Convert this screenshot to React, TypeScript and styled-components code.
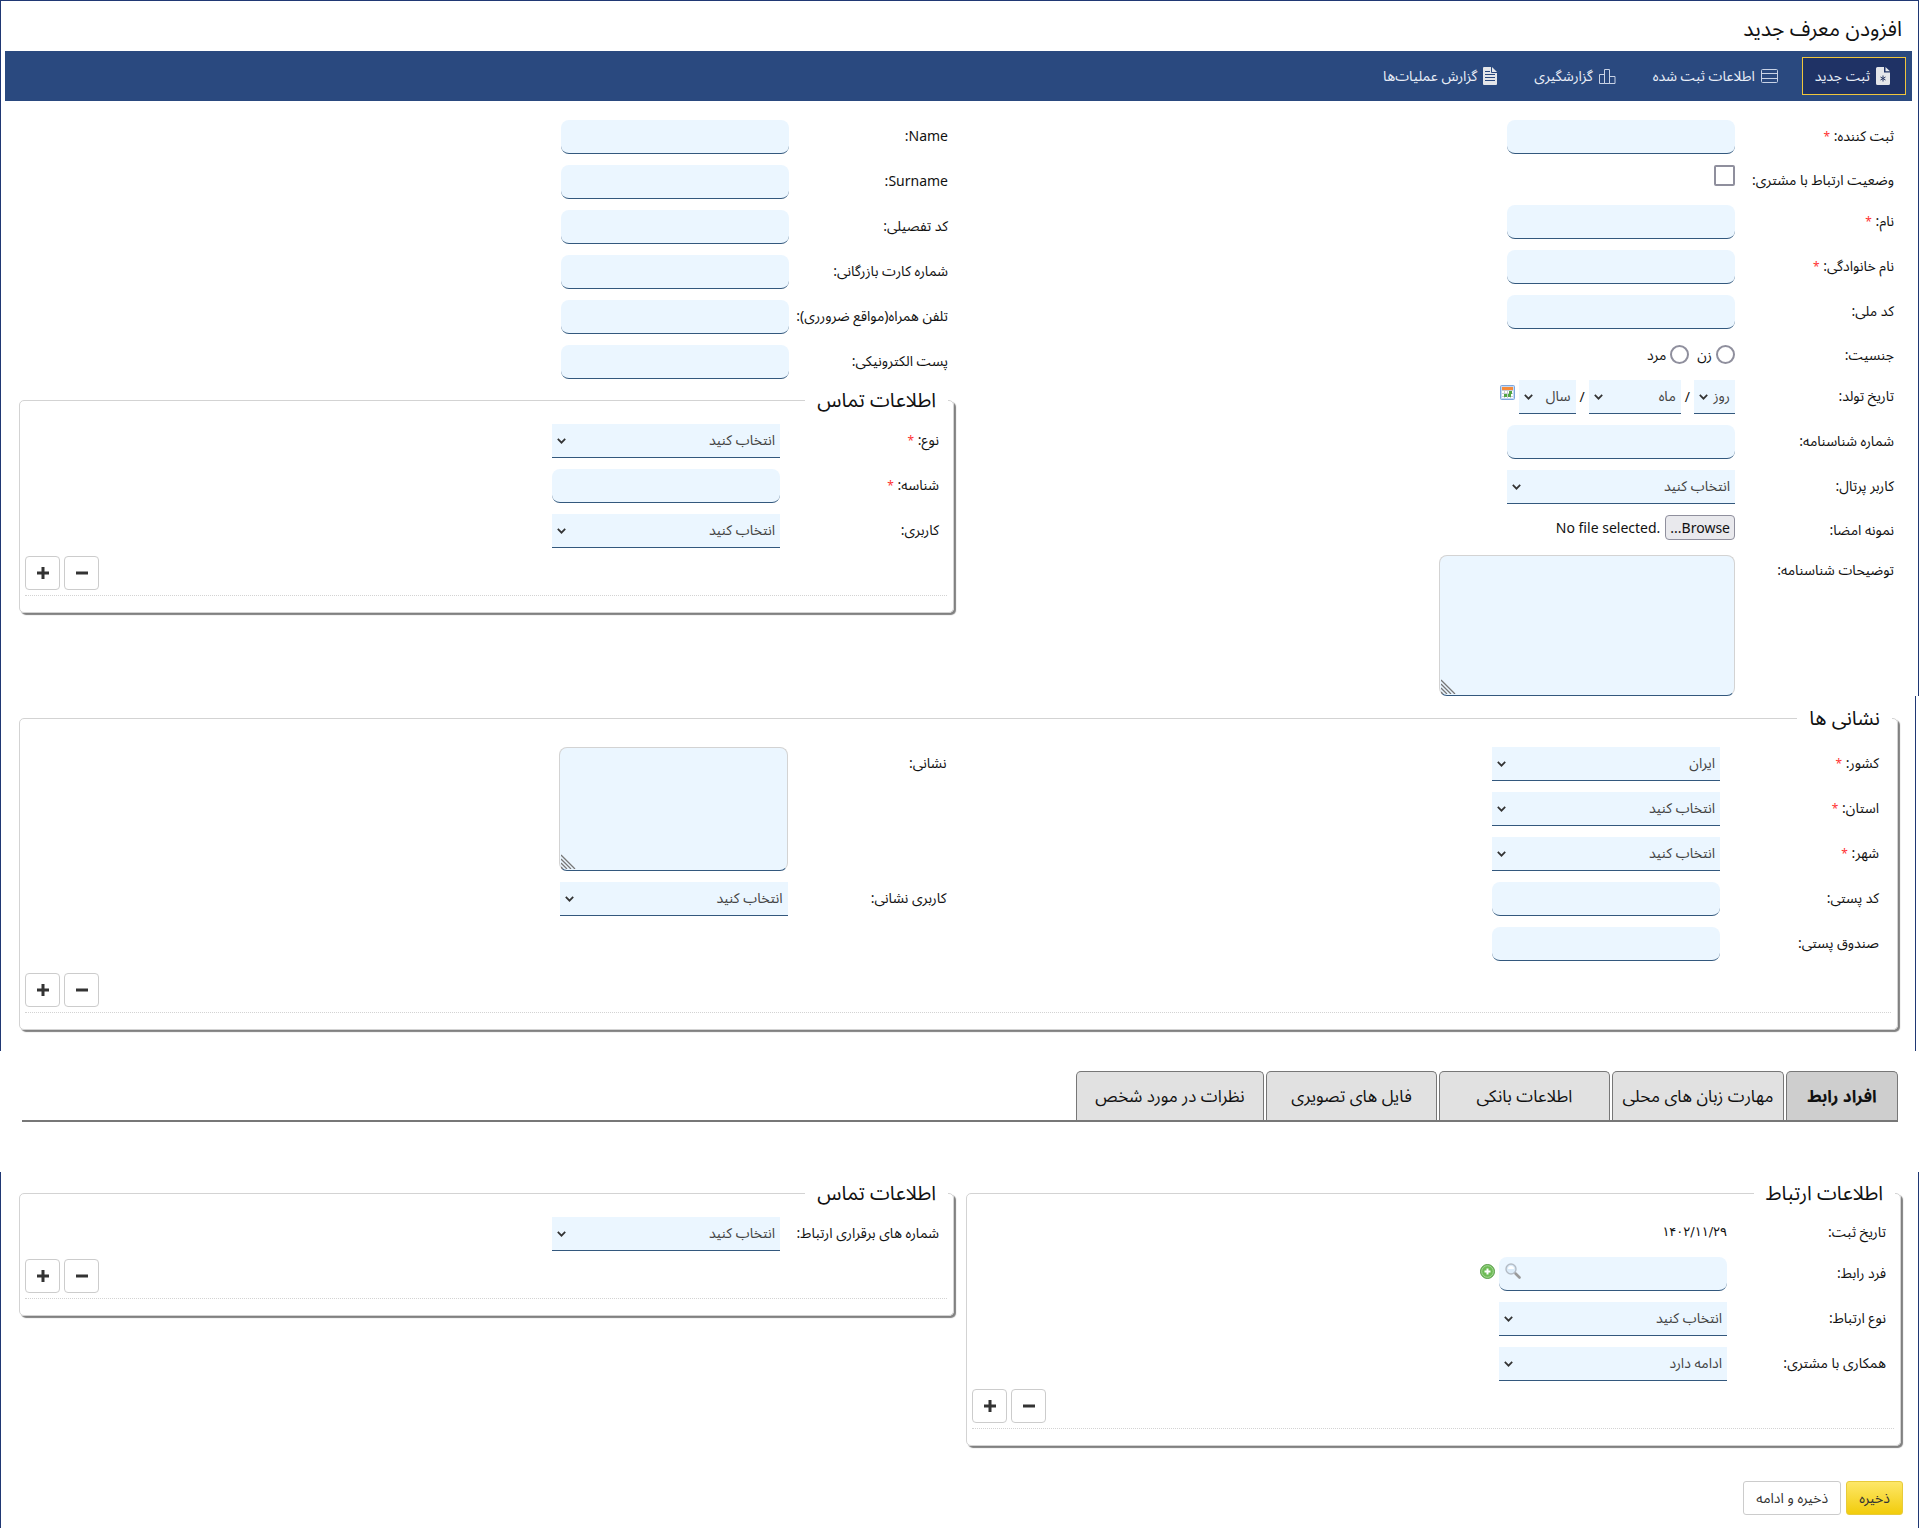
import React, { useId, useRef } from "react";
import styled, { createGlobalStyle, css } from "styled-components";

const color = {
  navy: "#203874",
  bar: "#2a497f",
  barActive: "#1f3265",
  gold: "#f0c63c",
  field: "#ebf6ff",
  fieldLine: "#33587d",
  line: "#d3d3d3",
  shade: "#808080",
  control: "#8f8f9d",
  text: "#111111",
  muted: "#444444",
  required: "#ff3333",
};

const GlobalStyle = createGlobalStyle`
  *, *::before, *::after { box-sizing: border-box; }
  body {
    margin: 0;
    background: #ffffff;
    color: ${color.text};
    font-family: "Noto Sans", "Noto Sans Arabic", "DejaVu Sans", sans-serif;
    font-size: 14px;
    line-height: 20px;
  }
  button, input, select, textarea { font: inherit; color: inherit; margin: 0; }
`;

/* ---------- page structure ---------- */

const Page = styled.main`
  direction: rtl;
`;

const Panel = styled.section<{ $first?: boolean; $narrow?: boolean }>`
  margin-right: ${(p) => (p.$narrow ? 4 : 1)}px;
  border: solid ${color.navy};
  border-width: ${(p) => (p.$first ? 1 : 0)}px 1px 0;
`;

const Title = styled.h1`
  margin: 0;
  padding: 9px 16px 5px;
  font-size: 21px;
  font-weight: 400;
  line-height: 36px;
`;

const Toolbar = styled.nav`
  display: flex;
  gap: 8px;
  margin: 0 6px 0 4px;
  padding: 6px;
  background: ${color.bar};
`;

const ToolLink = styled.a<{ $active?: boolean }>`
  display: flex;
  align-items: center;
  gap: 6px;
  height: 38px;
  padding: 0 15px 0 12px;
  border: 1px solid ${(p) => (p.$active ? color.gold : "transparent")};
  background: ${(p) => (p.$active ? color.barActive : "transparent")};
  color: #e9eef7;
  text-decoration: none;
`;

const Halves = styled.div<{ $top?: number }>`
  display: grid;
  grid-template-columns: 1fr 1fr;
  gap: 12px;
  align-items: start;
  padding: ${(p) => p.$top ?? 0}px 17px 0 18px;
`;

const FullWidth = styled.div`
  padding: 7px 17px 21px 18px;
`;

const Column = styled.div`
  display: flex;
  flex-direction: column;
  gap: 6px;
`;

const Rows = styled.div<{ $indent?: number }>`
  display: flex;
  flex-direction: column;
  gap: 11px;
  padding-right: ${(p) => p.$indent ?? 0}px;
`;

const Row = styled.div<{ $low?: boolean }>`
  display: grid;
  grid-template-columns: 159px 1fr;
  align-items: start;
  min-height: ${(p) => (p.$low ? 29 : 34)}px;
`;

const labelText = css<{ $low?: boolean }>`
  line-height: ${(p) => (p.$low ? 29 : 32)}px;
  white-space: nowrap;
`;

const Label = styled.label<{ $low?: boolean }>`
  ${labelText}
`;

const Caption = styled.span<{ $low?: boolean }>`
  ${labelText}
`;

const DateValue = styled.span`
  font-family: "DejaVu Sans", sans-serif;
  font-size: 13px;
  line-height: 29px;
`;

const Star = styled.span`
  color: ${color.required};
  font-size: 12px;
`;

/* ---------- controls ---------- */

const roundField = css`
  border: 0;
  border-bottom: 1px solid ${color.fieldLine};
  border-radius: 8px;
  background: ${color.field};
  outline: none;
`;

const TextInput = styled.input`
  ${roundField}
  display: block;
  width: 228px;
  height: 34px;
  padding: 0 8px;
`;

const AreaBox = styled.div<{ $wide?: boolean }>`
  position: relative;
  width: ${(p) => (p.$wide ? 296 : 229)}px;
  height: ${(p) => (p.$wide ? 141 : 124)}px;
`;

const Area = styled.textarea`
  ${roundField}
  display: block;
  width: 100%;
  height: 100%;
  padding: 8px;
  border: 1px solid ${color.line};
  border-bottom-color: ${color.fieldLine};
  resize: none;
`;

const Grip = styled.svg`
  position: absolute;
  left: 2px;
  bottom: 2px;
  pointer-events: none;
`;

const SelectBox = styled.div<{ $width: number }>`
  position: relative;
  width: ${(p) => p.$width}px;
  height: 34px;
`;

const NativeSelect = styled.select`
  appearance: none;
  display: block;
  width: 100%;
  height: 100%;
  padding: 0 5px 1px;
  border: 0;
  border-bottom: 1px solid ${color.fieldLine};
  border-radius: 0;
  background: ${color.field};
  color: ${color.muted};
  outline: none;
`;

const Chevron = styled.svg`
  position: absolute;
  left: 5px;
  top: 14px;
  pointer-events: none;
`;

const CheckBox = styled.input`
  appearance: none;
  display: block;
  width: 21px;
  height: 21px;
  border: 2px solid ${color.control};
  border-radius: 2px;
  background: #ffffff;
  &:checked { background: ${color.bar}; }
`;

const RadioRow = styled.div`
  display: flex;
  gap: 8px;
  height: 29px;
`;

const RadioLabel = styled.label`
  display: flex;
  align-items: center;
  gap: 4px;
`;

const Radio = styled.input`
  appearance: none;
  width: 19px;
  height: 19px;
  border: 2px solid ${color.control};
  border-radius: 50%;
  background: #ffffff;
  &:checked { background: ${color.bar}; }
`;

const Inline = styled.div<{ $gap: number }>`
  display: flex;
  align-items: center;
  gap: ${(p) => p.$gap}px;
`;

const IconButton = styled.button<{ $drop: number }>`
  display: flex;
  align-self: flex-start;
  padding: ${(p) => p.$drop}px 0 0;
  border: 0;
  background: none;
  cursor: pointer;
`;

const HiddenFile = styled.input`
  position: absolute;
  width: 1px;
  height: 1px;
  opacity: 0;
  pointer-events: none;
`;

const BrowseButton = styled.button`
  height: 25px;
  padding: 0 4px;
  border: 1px solid ${color.control};
  border-radius: 4px;
  background: #e9e9ed;
  line-height: 22px;
`;

const SearchBox = styled.div`
  position: relative;
`;

const SearchIcon = styled.svg`
  position: absolute;
  left: 6px;
  top: 6px;
  pointer-events: none;
`;

/* ---------- field groups ---------- */

const Group = styled.fieldset<{ $roomy?: boolean }>`
  min-width: 0;
  margin: 0;
  padding: ${(p) => (p.$roomy ? 14 : 9)}px 0 16px;
  border: 1px solid ${color.line};
  border-radius: 5px;
  box-shadow: 2px 2px 1px ${color.shade};
`;

const Legend = styled.legend`
  margin-right: 5px;
  padding: 0 12px;
  font-size: 20px;
  line-height: 30px;
`;

const AddressGrid = styled.div`
  display: grid;
  grid-template-columns: 1fr 1fr;
  gap: 6px;
  padding-right: 18px;
`;

const GroupFooter = styled.div<{ $roomy?: boolean }>`
  display: flex;
  justify-content: flex-end;
  gap: 4px;
  margin: ${(p) => (p.$roomy ? 12 : 8)}px 6px 0 5px;
  padding-bottom: 5px;
  border-bottom: 1px dotted ${color.line};
`;

const StepButton = styled.button`
  display: flex;
  align-items: center;
  justify-content: center;
  width: 35px;
  height: 34px;
  padding: 0;
  border: 1px solid #cccccc;
  border-radius: 4px;
  background: #ffffff;
`;

/* ---------- tabs and footer ---------- */

const TabArea = styled.div`
  padding: 20px 22px 50px;
`;

const TabList = styled.div`
  display: flex;
  gap: 2px;
  border-bottom: 2px solid #777777;
`;

const Tab = styled.button<{ $active?: boolean; $width: number }>`
  width: ${(p) => p.$width}px;
  height: 49px;
  padding: 0;
  border: 1px solid #777777;
  border-bottom: 0;
  border-radius: 5px 5px 0 0;
  background: ${(p) => (p.$active ? "#cecece" : "#e1e1e1")};
  font-size: 17px;
  font-weight: ${(p) => (p.$active ? 700 : 400)};
`;

const Actions = styled.div`
  display: flex;
  gap: 5px;
  padding: 35px 15px 13px;
`;

const Action = styled.button<{ $primary?: boolean }>`
  height: 34px;
  padding: 0 12px;
  border: 1px solid ${(p) => (p.$primary ? "#e8cb3a" : "#cccccc")};
  border-radius: 3px;
  background: ${(p) => (p.$primary ? "linear-gradient(#fde768, #f2cc0c)" : "#ffffff")};
  color: #333333;
`;

/* ---------- drawings ---------- */

const NewDocIcon = () => (
  <svg width="14" height="18" viewBox="0 0 14 18">
    <path d="M1.5 0H8v5.500h6v11A1.500 1.500 0 0 1 12.500 18h-11A1.500 1.500 0 0 1 0 16.500v-15A1.500 1.500 0 0 1 1.500 0z" fill="#e4e6ea" />
    <path d="M9.500 0L14 4.200H9.500z" fill="#e4e6ea" />
    <path d="M7 8.500v6M4.500 10l5 3M9.500 10l-5 3" stroke="#2a3a66" strokeWidth="1" />
  </svg>
);

const TableIcon = () => (
  <svg width="17" height="14" viewBox="0 0 17 14" fill="none" stroke="#c9d3e6">
    <rect x="0.5" y="0.5" width="16" height="13" rx="1" />
    <path d="M0 4.500h17M0 9.500h17" />
  </svg>
);

const ChartIcon = () => (
  <svg width="17" height="15" viewBox="0 0 17 15" fill="none" stroke="#c9d3e6">
    <path d="M0.500 14.500v-9h5v9zM5.500 14.500v-14h5v14zM10.500 14.500v-7h5.500v7z" />
  </svg>
);

const ReportIcon = () => (
  <svg width="14" height="18" viewBox="0 0 14 18">
    <path d="M1 0h8l5 5v12a1 1 0 0 1-1 1H1a1 1 0 0 1-1-1V1a1 1 0 0 1 1-1z" fill="#e4e6ea" />
    <path d="M8.500 0v5.500H14M2 4.500h5M2 7.500h10M2 10.500h10M2 13.500h10" stroke="#2a497f" fill="none" />
  </svg>
);

const CalendarIcon = () => (
  <svg width="15" height="15" viewBox="0 0 15 15">
    <rect x="0.500" y="0.500" width="14" height="14" rx="1" fill="#c4dbf5" stroke="#7fa6dc" />
    <rect x="2" y="2" width="11" height="11" fill="#ffffff" />
    <rect x="2" y="2" width="11" height="3" fill="#f58b3c" />
    <path d="M2 5.500h11M2 8.500h11M2 11.500h11M4.500 5v8M7.500 5v8M10.500 5v8" stroke="#c8cdd4" />
    <path d="M9 6h3v3H9zM4 9h3v3H4zM8 9h3v3H8z" fill="#52a545" />
  </svg>
);

const Magnifier = () => (
  <SearchIcon width="16" height="16" viewBox="0 0 16 16" fill="none">
    <path d="M10.500 10.500l4 4" stroke="#9a9a9a" strokeWidth="2.600" strokeLinecap="round" />
    <circle cx="6" cy="6" r="5" fill="#dcecf9" stroke="#b4bcc6" strokeWidth="1.400" />
    <path d="M3 6a3 3 0 0 1 6 0z" fill="#ffffff" />
  </SearchIcon>
);

const AddIcon = () => (
  <svg width="15" height="15" viewBox="0 0 15 15">
    <circle cx="7.500" cy="7.500" r="7" fill="#6dbb55" stroke="#5a9c4a" />
    <circle cx="7.500" cy="7.500" r="5.800" fill="none" stroke="#a5d996" />
    <path d="M7.500 4.500v6M4.500 7.500h6" stroke="#ffffff" strokeWidth="2" />
  </svg>
);

const PlusIcon = () => (
  <svg width="12" height="12" viewBox="0 0 12 12">
    <path d="M6 0v12M0 6h12" stroke="#333333" strokeWidth="3" />
  </svg>
);

const MinusIcon = () => (
  <svg width="12" height="12" viewBox="0 0 12 12">
    <path d="M0 6h12" stroke="#333333" strokeWidth="3" />
  </svg>
);

/* ---------- composed parts ---------- */

const Required = () => (
  <>
    {" "}
    <Star>*</Star>
  </>
);

type FieldProps = { label: string; required?: boolean };

const TextField = ({ label, required }: FieldProps) => {
  const id = useId();
  return (
    <Row>
      <Label htmlFor={id}>
        {label}:{required && <Required />}
      </Label>
      <TextInput id={id} type="text" required={required} />
    </Row>
  );
};

type PickProps = { id?: string; value: string; width?: number; name?: string };

const Pick = ({ id, value, width = 228, name }: PickProps) => (
  <SelectBox $width={width}>
    <NativeSelect id={id} aria-label={name} defaultValue={value}>
      <option>{value}</option>
    </NativeSelect>
    <Chevron width="9" height="6" viewBox="0 0 9 6" fill="none">
      <path d="M0.800 0.800l3.700 3.900 3.700-3.900" stroke="#333333" strokeWidth="1.700" />
    </Chevron>
  </SelectBox>
);

const SelectField = ({ label, required, value = "انتخاب کنید" }: FieldProps & { value?: string }) => {
  const id = useId();
  return (
    <Row>
      <Label htmlFor={id}>
        {label}:{required && <Required />}
      </Label>
      <Pick id={id} value={value} />
    </Row>
  );
};

const AreaField = ({ label, wide }: FieldProps & { wide?: boolean }) => {
  const id = useId();
  return (
    <Row>
      <Label htmlFor={id} $low={wide}>
        {label}:
      </Label>
      <AreaBox $wide={wide}>
        <Area id={id} />
        <Grip width="15" height="15" viewBox="0 0 15 15" fill="none">
          <path d="M0 1l14 14M0 5l10 10M0 9l6 6M0 13l2 2" stroke="#777777" strokeWidth="1.300" />
        </Grip>
      </AreaBox>
    </Row>
  );
};

const FileField = ({ label }: FieldProps) => {
  const id = useId();
  const input = useRef<HTMLInputElement>(null);
  return (
    <Row $low>
      <Label htmlFor={id} $low>
        {label}:
      </Label>
      <Inline $gap={5}>
        <HiddenFile ref={input} id={id} type="file" tabIndex={-1} />
        <BrowseButton type="button" onClick={() => input.current?.click()}>
          Browse...
        </BrowseButton>
        <bdi>No file selected.</bdi>
      </Inline>
    </Row>
  );
};

const Steps = ({ roomy }: { roomy?: boolean }) => (
  <GroupFooter $roomy={roomy}>
    <StepButton type="button" aria-label="حذف">
      <MinusIcon />
    </StepButton>
    <StepButton type="button" aria-label="افزودن">
      <PlusIcon />
    </StepButton>
  </GroupFooter>
);

const tools = [
  { text: "ثبت جدید", Icon: NewDocIcon },
  { text: "اطلاعات ثبت شده", Icon: TableIcon },
  { text: "گزارشگیری", Icon: ChartIcon },
  { text: "گزارش عملیات‌ها", Icon: ReportIcon },
];

const tabs = [
  { text: "افراد رابط", width: 112 },
  { text: "مهارت زبان های محلی", width: 172 },
  { text: "اطلاعات بانکی", width: 171 },
  { text: "فایل های تصویری", width: 171 },
  { text: "نظرات در مورد شخص", width: 188 },
];

const PersonFields = () => (
  <Rows $indent={7}>
    <TextField label="ثبت کننده" required />
    <Row $low>
      <Label htmlFor="customer-link" $low>
        وضعیت ارتباط با مشتری:
      </Label>
      <CheckBox id="customer-link" type="checkbox" />
    </Row>
    <TextField label="نام" required />
    <TextField label="نام خانوادگی" required />
    <TextField label="کد ملی" />
    <Row $low role="radiogroup" aria-labelledby="gender">
      <Caption id="gender" $low>
        جنسیت:
      </Caption>
      <RadioRow>
        <RadioLabel>
          <Radio type="radio" name="gender" />
          زن
        </RadioLabel>
        <RadioLabel>
          <Radio type="radio" name="gender" />
          مرد
        </RadioLabel>
      </RadioRow>
    </Row>
    <Row>
      <Label htmlFor="birth-day">تاریخ تولد:</Label>
      <Inline $gap={4}>
        <Pick id="birth-day" value="روز" width={41} />
        /
        <Pick value="ماه" width={92} name="ماه" />
        /
        <Pick value="سال" width={57} name="سال" />
        <IconButton type="button" aria-label="تقویم" $drop={5}>
          <CalendarIcon />
        </IconButton>
      </Inline>
    </Row>
    <TextField label="شماره شناسنامه" />
    <SelectField label="کاربر پرتال" />
    <FileField label="نمونه امضا" />
    <AreaField label="توضیحات شناسنامه" wide />
  </Rows>
);

export default function App() {
  return (
    <Page>
      <GlobalStyle />
      <Panel $first>
        <Title>افزودن معرف جدید</Title>
        <Toolbar>
          {tools.map(({ text, Icon }, i) => (
            <ToolLink key={text} href="#" $active={i === 0}>
              <Icon />
              {text}
            </ToolLink>
          ))}
        </Toolbar>
        <Halves $top={19}>
          <PersonFields />
          <Column>
            <Rows $indent={6}>
              <TextField label="Name" />
              <TextField label="Surname" />
              <TextField label="کد تفصیلی" />
              <TextField label="شماره کارت بازرگانی" />
              <TextField label="تلفن همراه(مواقع ضرورری)" />
              <TextField label="پست الکترونیکی" />
            </Rows>
            <Group>
              <Legend>اطلاعات تماس</Legend>
              <Rows $indent={14}>
                <SelectField label="نوع" required />
                <TextField label="شناسه" required />
                <SelectField label="کاربری" />
              </Rows>
              <Steps />
            </Group>
          </Column>
        </Halves>
      </Panel>

      <Panel $narrow>
        <FullWidth>
          <Group $roomy>
            <Legend>نشانی ها</Legend>
            <AddressGrid>
              <Rows>
                <SelectField label="کشور" required value="ایران" />
                <SelectField label="استان" required />
                <SelectField label="شهر" required />
                <TextField label="کد پستی" />
                <TextField label="صندوق پستی" />
              </Rows>
              <Rows>
                <AreaField label="نشانی" />
                <SelectField label="کاربری نشانی" />
              </Rows>
            </AddressGrid>
            <Steps roomy />
          </Group>
        </FullWidth>
      </Panel>

      <TabArea>
        <TabList role="tablist">
          {tabs.map(({ text, width }, i) => (
            <Tab key={text} type="button" role="tab" aria-selected={i === 0} $active={i === 0} $width={width}>
              {text}
            </Tab>
          ))}
        </TabList>
      </TabArea>

      <Panel>
        <Halves $top={6}>
          <Group>
            <Legend>اطلاعات ارتباط</Legend>
            <Rows $indent={14}>
              <Row $low>
                <Caption $low>تاریخ ثبت:</Caption>
                <DateValue>۱۴۰۲/۱۱/۲۹</DateValue>
              </Row>
              <Row>
                <Label htmlFor="contact-person">فرد رابط:</Label>
                <Inline $gap={4}>
                  <SearchBox>
                    <TextInput id="contact-person" type="text" />
                    <Magnifier />
                  </SearchBox>
                  <IconButton type="button" aria-label="افزودن فرد رابط" $drop={7}>
                    <AddIcon />
                  </IconButton>
                </Inline>
              </Row>
              <SelectField label="نوع ارتباط" />
              <SelectField label="همکاری با مشتری" value="ادامه دارد" />
            </Rows>
            <Steps />
          </Group>
          <Group>
            <Legend>اطلاعات تماس</Legend>
            <Rows $indent={14}>
              <SelectField label="شماره های برقراری ارتباط" />
            </Rows>
            <Steps />
          </Group>
        </Halves>
        <Actions>
          <Action type="button" $primary>
            ذخیره
          </Action>
          <Action type="button">ذخیره و ادامه</Action>
        </Actions>
      </Panel>
    </Page>
  );
}
